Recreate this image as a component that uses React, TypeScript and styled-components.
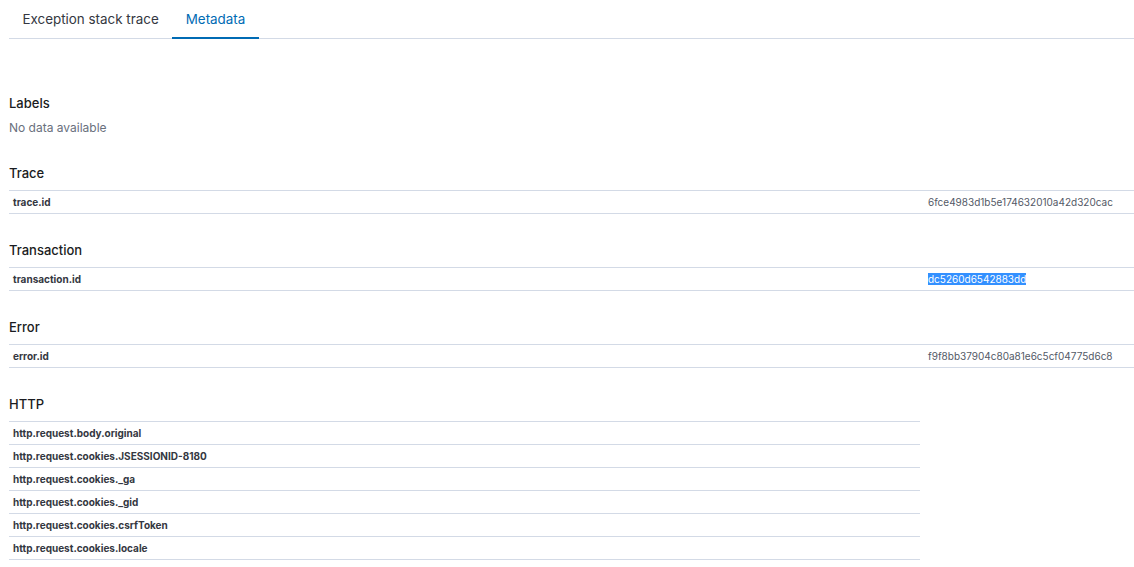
import { FC } from "react";
import styled, { createGlobalStyle } from "styled-components";

const GlobalStyle = createGlobalStyle`
  body {
    margin: 0;
    background: #fff;
    font-family: Inter, "Noto Sans", sans-serif;
    color: #343741;
  }
`;

type Row = { key: string; value?: string; selected?: boolean };

type Section = { title: string; rows: Row[]; narrow?: boolean };

const sections: Section[] = [
  { title: "Trace", rows: [{ key: "trace.id", value: "6fce4983d1b5e174632010a42d320cac" }] },
  {
    title: "Transaction",
    rows: [{ key: "transaction.id", value: "dc5260d6542883dd", selected: true }],
  },
  { title: "Error", rows: [{ key: "error.id", value: "f9f8bb37904c80a81e6c5cf04775d6c8" }] },
  {
    title: "HTTP",
    narrow: true,
    rows: [
      { key: "http.request.body.original" },
      { key: "http.request.cookies.JSESSIONID-8180" },
      { key: "http.request.cookies._ga" },
      { key: "http.request.cookies._gid" },
      { key: "http.request.cookies.csrfToken" },
      { key: "http.request.cookies.locale" },
    ],
  },
];

const Page = styled.div`
  padding-left: 9px;
`;

const TabBar = styled.div`
  display: flex;
  height: 38px;
  border-bottom: 1px solid #d3dae6;
`;

const Tab = styled.div<{ $active?: boolean }>`
  display: flex;
  align-items: center;
  padding: 0 13.5px 2px;
  font-size: 13.4px;
  color: ${(p) => (p.$active ? "#006bb4" : "#343741")};
  box-shadow: ${(p) => (p.$active ? "inset 0 -2px 0 #006bb4" : "none")};
  margin-bottom: -1px;
`;

const Content = styled.div`
  padding-top: 54px;
`;

const Block = styled.section`
  margin-bottom: 26px;
`;

const Heading = styled.h6`
  margin: 0 0 7px;
  font-size: 13px;
  font-weight: 500;
  color: #1a1c21;
  line-height: 20px;
`;

const Empty = styled.div`
  font-size: 12px;
  color: #69707d;
  line-height: 14px;
  padding: 1px 0 2px;
`;

const Table = styled.div<{ $narrow?: boolean }>`
  width: ${(p) => (p.$narrow ? "911px" : "100%")};
  border-top: 1px solid #d3dae6;
`;

const TableRow = styled.div`
  display: grid;
  grid-template-columns: 915px 1fr;
  height: 22px;
  align-items: center;
  border-bottom: 1px solid #d3dae6;
  font-size: 10px;
`;

const Key = styled.div`
  padding-left: 4px;
  font-weight: 700;
  color: #343741;
`;

const Value = styled.div`
  padding-left: 4px;
  color: #535966;
`;

const Selected = styled.span`
  background: #3390ff;
  color: #fff;
`;

const MetaTable: FC<{ section: Section }> = ({ section }) => (
  <Block>
    <Heading>{section.title}</Heading>
    <Table $narrow={section.narrow}>
      {section.rows.map((r) => (
        <TableRow key={r.key}>
          <Key>{r.key}</Key>
          <Value>{r.selected ? <Selected>{r.value}</Selected> : r.value}</Value>
        </TableRow>
      ))}
    </Table>
  </Block>
);

export default function App() {
  return (
    <Page>
      <GlobalStyle />
      <TabBar>
        <Tab>Exception stack trace</Tab>
        <Tab $active>Metadata</Tab>
      </TabBar>
      <Content>
        <Block>
          <Heading>Labels</Heading>
          <Empty>No data available</Empty>
        </Block>
        {sections.map((s) => (
          <MetaTable key={s.title} section={s} />
        ))}
      </Content>
    </Page>
  );
}
